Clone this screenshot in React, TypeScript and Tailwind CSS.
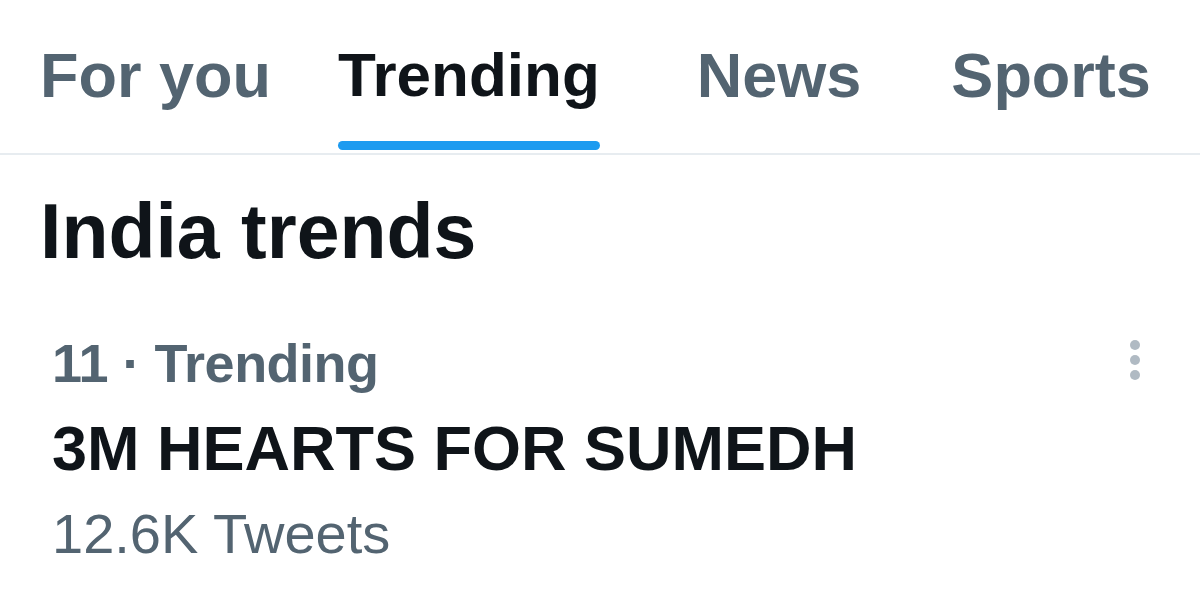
const tabs = [
  { label: "For you", cls: "" },
  { label: "Trending", cls: "ml-[67px]" },
  { label: "News", cls: "ml-[97px]" },
  { label: "Sports", cls: "ml-[90px]" },
];

export default function App() {
  const active = "Trending";

  return (
    <div className="w-[1200px] h-[611px] bg-white overflow-hidden font-['Liberation_Sans',Arial,sans-serif]">
      {/* tabs */}
      <div className="flex h-[155px] pl-[40px] border-b-2 border-[#e7ecf0]">
        {tabs.map((t) => (
          <div key={t.label} className={`inline-flex flex-col pt-[44px] ${t.cls}`}>
            <span
              className={
                t.label === active
                  ? "text-[62px] leading-none font-bold text-[#0f1419]"
                  : "text-[63px] leading-none font-bold text-[#536471]"
              }
            >
              {t.label}
            </span>
            {t.label === active && (
              <span className="mt-[35px] h-[9px] w-full rounded-full bg-[#1d9bf0]" />
            )}
          </div>
        ))}
      </div>

      {/* heading */}
      <h2 className="mt-[38px] pl-[40px] text-[77px] leading-none font-bold text-[#0f1419]">
        India trends
      </h2>

      {/* trend item */}
      <div className="flex justify-between mt-[66px] pl-[52px] pr-[60px]">
        <div className="flex flex-col">
          <span className="text-[54px] leading-none font-bold text-[#536471] tracking-[-0.5px]">
            11 · Trending
          </span>
          <span className="mt-[27px] text-[63px] leading-none font-bold text-[#0f1419]">
            3M HEARTS FOR SUMEDH
          </span>
          <span className="mt-[26px] text-[56px] leading-none font-normal text-[#536471]">
            12.6K Tweets
          </span>
        </div>
        <div className="flex flex-col gap-[5px] mt-[4px]">
          <span className="w-[10px] h-[10px] rounded-full bg-[#b0bac3]" />
          <span className="w-[10px] h-[10px] rounded-full bg-[#b0bac3]" />
          <span className="w-[10px] h-[10px] rounded-full bg-[#b0bac3]" />
        </div>
      </div>
    </div>
  );
}
